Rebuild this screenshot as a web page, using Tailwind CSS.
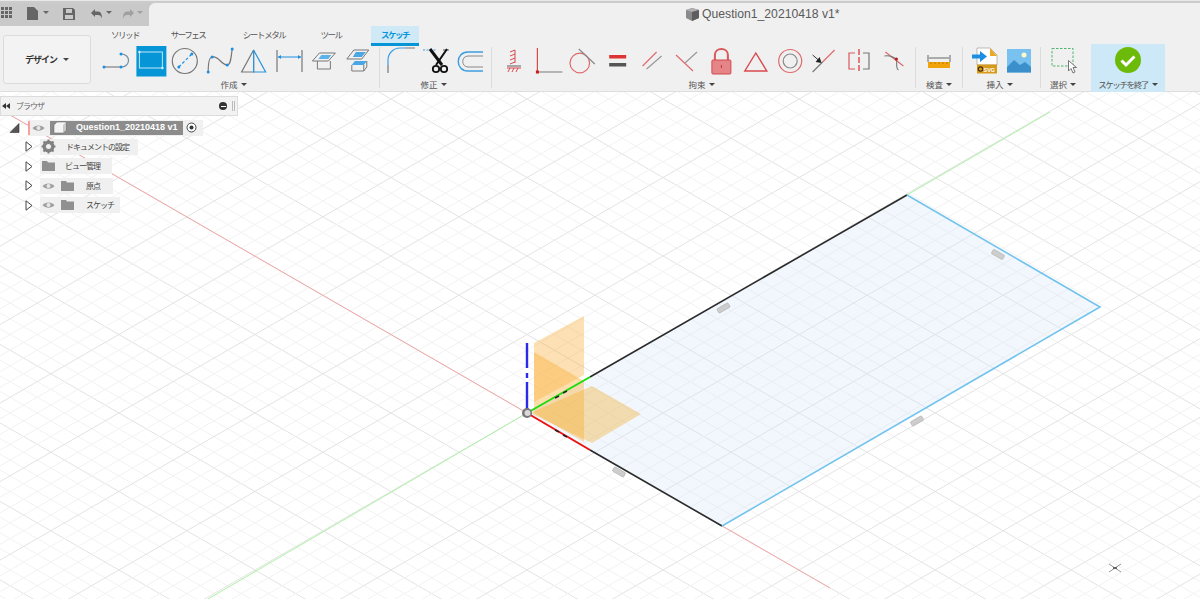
<!DOCTYPE html>
<html lang="ja">
<head>
  <meta charset="UTF-8" />
  <title>Question1_20210418 v1*</title>
  <script src="https://cdn.jsdelivr.net/npm/@tailwindcss/browser@4"></script>
</head>
<body class="bg-white w-[1200px] h-[599px] overflow-hidden flex flex-col font-['Noto_Sans_CJK_JP','Noto_Sans',sans-serif] text-[#555]">

  <!-- top bar -->
  <div class="h-[3px] bg-[#cbcbcb] border-t border-[#e8e8e8]"></div>
  <div class="h-[23px] flex bg-[#c9c9c9]">
    <div class="w-[149px] relative">
      <svg class="w-[149px] h-[23px]" viewBox="0 3 149 23">
        <g fill="#666">
          <rect x="1" y="7" width="3" height="3"/><rect x="5" y="7" width="3" height="3"/><rect x="9" y="7" width="3" height="3"/>
          <rect x="1" y="11" width="3" height="3"/><rect x="5" y="11" width="3" height="3"/><rect x="9" y="11" width="3" height="3"/>
          <rect x="1" y="15" width="3" height="3"/><rect x="5" y="15" width="3" height="3"/><rect x="9" y="15" width="3" height="3"/>
          <path d="M27 7h7l4 4v9H27z"/>
          <path d="M43 11h6l-3 3z"/>
          <path d="M63 8h10l2 2v10H63zM66 9v4h6V9zM65 15v4h8v-4z" fill-rule="evenodd"/>
          <path d="M106 11h6l-3 3z"/>
        </g>
        <path d="M91 13l4-4v2.500h3c3 0 4 3 4 7-1-2.500-2-3.500-4-3.500h-3V17z" fill="#666"/>
        <path d="M134 13l-4-4v2.500h-3c-3 0-4 3-4 7 1-2.500 2-3.500 4-3.500h3V17z" fill="#a0a0a0"/>
        <path d="M137 11h6l-3 3z" fill="#a0a0a0"/>
      </svg>
    </div>
    <div class="flex-1 bg-[#f0f0f0] rounded-tl-md flex items-center">
      <svg class="w-[15px] h-[15px] ml-[536px]" viewBox="0 0 15 15">
        <path d="M1 3l6-2 7 2v8l-7 3-6-3z" fill="#8a8a8a"/>
        <path d="M1 3l6 2 7-2-7-2z" fill="#b0b0b0"/>
        <path d="M7 5l7-2v8l-7 3z" fill="#5e5e5e"/>
      </svg>
      <span class="ml-[2px] text-[12.200px] font-['Liberation_Sans',sans-serif] text-[#5a5a5a]">Question1_20210418 v1*</span>
    </div>
  </div>

  <!-- toolbar -->
  <div class="h-[66px] shrink-0 bg-[#f0f0f0] border-b border-[#dedede] flex">
    <div class="w-[100px] shrink-0 pt-[9px] pl-[3px]">
      <div class="w-[88px] h-[49px] rounded-[3px] border border-[#dcdcdc] bg-[#f3f3f3] flex items-center justify-center gap-[6px] text-[9px] tracking-[-1px] font-bold text-[#333]">
        デザイン
        <span class="w-0 h-0 border-x-[3px] border-x-transparent border-t-[3px] border-t-[#444]"></span>
      </div>
    </div>
    <div class="flex-1 flex flex-col">
      <div class="h-[20px] flex text-[8.500px] tracking-[-1.500px] leading-[17px] text-center">
        <div class="w-[50px]">ソリッド</div>
        <div class="w-[76px]">サーフェス</div>
        <div class="w-[76px]">シート メタル</div>
        <div class="w-[58px]">ツール</div>
        <div class="ml-[11px] w-[48px] h-[20px] bg-[#cfe9f7] border-b-[3px] border-[#0696d7] font-bold text-[#0696d7]">スケッチ</div>
      </div>
      <div class="h-[46px] flex">

        <!-- create -->
        <div class="w-[279px] shrink-0 flex flex-col">
          <div class="flex h-[36px] -mt-[2px]">
            <svg class="w-[34.600px] h-[36px] shrink-0" viewBox="100 44 34.600 36">
              <path d="M104 67H121" stroke="#808080" stroke-width="1.200" fill="none"/>
              <path d="M121 54C131 54 131 67 121 67" stroke="#6d8ea6" stroke-width="1.200" fill="none"/>
              <g fill="#1d8fe0"><circle cx="104" cy="67" r="1.500"/><circle cx="121" cy="54" r="1.500"/><circle cx="121" cy="67" r="1.500"/></g>
            </svg>
            <svg class="w-[34.600px] h-[36px] shrink-0" viewBox="134.600 44 34.600 36">
              <rect x="136" y="46" width="30" height="30.500" fill="#0696d7"/>
              <rect x="139" y="52" width="23" height="16" fill="none" stroke="#bfe6f7" stroke-width="1"/>
              <g fill="#d6effa"><circle cx="139" cy="52" r="1.200"/><circle cx="162" cy="68" r="1.200"/></g>
            </svg>
            <svg class="w-[34.600px] h-[36px] shrink-0" viewBox="169.200 44 34.600 36">
              <circle cx="185" cy="61" r="12.500" fill="none" stroke="#777" stroke-width="1.200"/>
              <path d="M179 67L192 54" stroke="#1d8fe0" stroke-width="1.200" stroke-dasharray="3 2"/>
              <g fill="#1d8fe0"><circle cx="179" cy="67" r="1.500"/><circle cx="192" cy="54" r="1.500"/></g>
            </svg>
            <svg class="w-[34.600px] h-[36px] shrink-0" viewBox="203.800 44 34.600 36">
              <path d="M208 72C208 62 209 57 212 57C218 55 221 65 227 65C231 65 231 55 232 49" stroke="#777" stroke-width="1.200" fill="none"/>
              <g fill="#1d8fe0"><circle cx="208" cy="72" r="1.500"/><circle cx="212" cy="57" r="1.500"/><circle cx="227" cy="65" r="1.500"/><circle cx="232" cy="49" r="1.500"/></g>
            </svg>
            <svg class="w-[34.600px] h-[36px] shrink-0" viewBox="238.400 44 34.600 36">
              <path d="M254 50L242 72H254z" fill="none" stroke="#777" stroke-width="1.200"/>
              <path d="M254 50L266 72H254z" fill="none" stroke="#2a95dc" stroke-width="1.200"/>
            </svg>
            <svg class="w-[34.600px] h-[36px] shrink-0" viewBox="273 44 34.600 36">
              <path d="M277 50V72M302 50V72" stroke="#777" stroke-width="1.200"/>
              <path d="M278 57H301" stroke="#1d8fe0" stroke-width="1"/>
              <path d="M278 57l3-2v4zM301 57l-3-2v4z" fill="#1d8fe0"/>
            </svg>
            <svg class="w-[34.600px] h-[36px] shrink-0" viewBox="307.600 44 34.600 36">
              <path d="M312 61L319 53H335L328 61z" fill="#f2f2f2" stroke="#777"/>
              <path d="M318 59L321 55H331L328 59z" fill="#5cb3ea"/>
              <path d="M317 61V69H330V61" fill="none" stroke="#777"/>
            </svg>
            <svg class="w-[34.600px] h-[36px] shrink-0" viewBox="342.200 44 34.600 36">
              <path d="M347 59L354 50H369L362 59z" fill="none" stroke="#777"/>
              <path d="M353 57L356 52H366L362 57z" fill="#4ba6e4"/>
              <path d="M352 65L355 61H367L364 65z" fill="#4ba6e4"/>
              <path d="M352 65V71H364V65M364 71L367 67V61" fill="none" stroke="#777"/>
            </svg>
          </div>
          <div class="h-[14px] -mt-[3px] pr-[12px] flex items-center justify-center gap-[3px] text-[8.500px]">作成<span class="w-0 h-0 border-x-[3px] border-x-transparent border-t-[3px] border-t-[#444]"></span></div>
        </div>
        <div class="w-px h-[41px] mt-[1px] bg-[#dcdcdc]"></div>

        <!-- modify -->
        <div class="w-[111px] shrink-0 flex flex-col">
          <div class="flex h-[36px] -mt-[2px] pl-[5px]">
            <svg class="w-[35px] h-[36px] shrink-0" viewBox="385 44 35 36">
              <path d="M388 65V60A12 12 0 0 1 400 48H405" fill="none" stroke="#3b9de0" stroke-width="1.200"/>
              <path d="M388 65V73M405 48H415" stroke="#777" stroke-width="1.200"/>
            </svg>
            <svg class="w-[35px] h-[36px] shrink-0" viewBox="420 44 35 36">
              <path d="M423 50H436" stroke="#3b9de0" stroke-width="1.200" stroke-dasharray="2 1.500"/>
              <path d="M443 50H449" stroke="#777" stroke-width="1.200"/>
              <path d="M430 49L442 65" stroke="#111" stroke-width="3"/>
              <path d="M447 49L436 65" stroke="#111" stroke-width="2"/>
              <circle cx="436" cy="69" r="3.200" fill="none" stroke="#111" stroke-width="1.800"/>
              <circle cx="444" cy="69" r="3.200" fill="none" stroke="#111" stroke-width="1.800"/>
            </svg>
            <svg class="w-[35px] h-[36px] shrink-0" viewBox="455 44 35 36">
              <path d="M483 52H468C455 52 455 71 468 71H483" fill="none" stroke="#3b9de0" stroke-width="1.400"/>
              <path d="M483 56H468C461 56 461 67 468 67H483" fill="none" stroke="#888" stroke-width="1"/>
            </svg>
          </div>
          <div class="h-[14px] -mt-[3px] pr-[4px] flex items-center justify-center gap-[3px] text-[8.500px]">修正<span class="w-0 h-0 border-x-[3px] border-x-transparent border-t-[3px] border-t-[#444]"></span></div>
        </div>
        <div class="w-px h-[41px] mt-[1px] bg-[#dcdcdc]"></div>

        <!-- constraints -->
        <div class="w-[423px] shrink-0 flex flex-col">
          <div class="flex h-[36px] -mt-[2px] pl-[4px]">
            <svg class="w-[34.600px] h-[36px] shrink-0" viewBox="496 44 34.600 36">
              <path d="M515 50V63M510 52l5-2M510 56l5-2M510 60l5-2M510 64l5-2" stroke="#d9484c" stroke-width="1"/>
              <path d="M507 66H521" stroke="#777" stroke-width="1.200"/>
              <path d="M507 68H521M508 72l2-4M512 72l2-4M516 72l2-4" stroke="#d9484c" stroke-width="1"/>
            </svg>
            <svg class="w-[34.600px] h-[36px] shrink-0" viewBox="530.600 44 34.600 36">
              <path d="M537 48V72" stroke="#d9484c" stroke-width="1.200"/>
              <path d="M538 72H562" stroke="#777" stroke-width="1"/>
              <rect x="535.500" y="70.500" width="3" height="3" fill="#d01818"/>
            </svg>
            <svg class="w-[34.600px] h-[36px] shrink-0" viewBox="565.200 44 34.600 36">
              <circle cx="580" cy="63" r="9.800" fill="none" stroke="#de6a6c" stroke-width="1.200"/>
              <path d="M579 49L595 64" stroke="#888" stroke-width="1.200"/>
            </svg>
            <svg class="w-[34.600px] h-[36px] shrink-0" viewBox="599.800 44 34.600 36">
              <rect x="609" y="55" width="17" height="3.500" fill="#d33"/>
              <rect x="609" y="63" width="17" height="3.500" fill="#555"/>
            </svg>
            <svg class="w-[34.600px] h-[36px] shrink-0" viewBox="634.400 44 34.600 36">
              <path d="M643 66L657 52" stroke="#de6a6c" stroke-width="1.200"/>
              <path d="M647 69L662 56" stroke="#999" stroke-width="1.200"/>
            </svg>
            <svg class="w-[34.600px] h-[36px] shrink-0" viewBox="669 44 34.600 36">
              <path d="M676 55L693 71" stroke="#de6a6c" stroke-width="1.200"/>
              <path d="M685 63L697 52" stroke="#999" stroke-width="1.200"/>
            </svg>
            <svg class="w-[34.600px] h-[36px] shrink-0" viewBox="703.600 44 34.600 36">
              <path d="M714.500 60V55C714.500 47 727.500 47 727.500 55V60" fill="none" stroke="#d9585c" stroke-width="2"/>
              <rect x="711.500" y="60" width="19" height="14" rx="1" fill="#e58587" stroke="#d2494d"/>
              <path d="M721 65V68" stroke="#b5383c"/>
            </svg>
            <svg class="w-[34.600px] h-[36px] shrink-0" viewBox="738.200 44 34.600 36">
              <path d="M756 53L745 71H767z" fill="none" stroke="#d9484c" stroke-width="1.400"/>
            </svg>
            <svg class="w-[34.600px] h-[36px] shrink-0" viewBox="772.800 44 34.600 36">
              <circle cx="790" cy="61" r="11.500" fill="none" stroke="#de6a6c" stroke-width="1.200"/>
              <circle cx="790" cy="61" r="7" fill="none" stroke="#888" stroke-width="1.200"/>
            </svg>
            <svg class="w-[34.600px] h-[36px] shrink-0" viewBox="807.400 44 34.600 36">
              <path d="M835 50L823 62" stroke="#de6a6c" stroke-width="1.200"/>
              <path d="M823 62L813 72" stroke="#777" stroke-width="1.200"/>
              <path d="M813 55L820 61" stroke="#333"/>
              <path d="M822 63L816 62L820 57z" fill="#222"/>
            </svg>
            <svg class="w-[34.600px] h-[36px] shrink-0" viewBox="842 44 34.600 36">
              <path d="M855 53H849V69H855" fill="none" stroke="#d9585c" stroke-width="1.200"/>
              <path d="M863 53H869V69H863" fill="none" stroke="#777" stroke-width="1.200"/>
              <path d="M859 49V72" stroke="#d9484c" stroke-width="1.400" stroke-dasharray="6 2"/>
            </svg>
            <svg class="w-[34.600px] h-[36px] shrink-0" viewBox="876.600 44 34.600 36">
              <path d="M885 52L903 66" stroke="#de6a6c" stroke-width="1.200"/>
              <path d="M884 56C890 55 895 58 896 60C897 63 895 68 898 70" fill="none" stroke="#777" stroke-width="1.100"/>
              <circle cx="896" cy="59" r="1.600" fill="#c81818"/>
            </svg>
          </div>
          <div class="h-[14px] -mt-[3px] pr-[4px] flex items-center justify-center gap-[3px] text-[8.500px]">拘束<span class="w-0 h-0 border-x-[3px] border-x-transparent border-t-[3px] border-t-[#444]"></span></div>
        </div>
        <div class="w-px h-[41px] mt-[1px] bg-[#dcdcdc]"></div>

        <!-- inspect -->
        <div class="w-[46px] shrink-0 flex flex-col">
          <div class="flex h-[36px] -mt-[2px] pl-[6px]">
            <svg class="w-[34px] h-[36px] shrink-0" viewBox="922 44 34 36">
              <path d="M928 55V62M950 55V62M929 58H949" stroke="#666"/>
              <rect x="928" y="62" width="22" height="6" fill="#f0a30a"/>
              <path d="M931 62v2M935 62v2M939 62v2M943 62v2M947 62v2" stroke="#a86f00" stroke-width=".7"/>
            </svg>
          </div>
          <div class="h-[14px] -mt-[3px] flex items-center justify-center gap-[3px] text-[8.500px]">検査<span class="w-0 h-0 border-x-[3px] border-x-transparent border-t-[3px] border-t-[#444]"></span></div>
        </div>
        <div class="w-px h-[41px] mt-[1px] bg-[#dcdcdc]"></div>

        <!-- insert -->
        <div class="w-[77px] shrink-0 flex flex-col">
          <div class="flex h-[36px] -mt-[2px] pl-[5px]">
            <svg class="w-[34px] h-[36px] shrink-0" viewBox="968 44 34 36">
              <path d="M977 48H990L997 55V65H977z" fill="#fff" stroke="#aaa" stroke-width=".8"/>
              <path d="M990 48L997 56H990z" fill="#eaa825"/>
              <rect x="977" y="64.500" width="20" height="9" fill="#d89a1d"/>
              <circle cx="980.500" cy="69" r="2.200" fill="none" stroke="#4a3208" stroke-width="1.200"/>
              <text x="983.500" y="71.500" font-size="5.500" font-weight="700" fill="#fff" font-family="Liberation Sans, sans-serif">SVG</text>
              <path d="M972 54.500H980V51L987 56.500L980 62V58.500H972z" fill="#1d8fe0"/>
            </svg>
            <svg class="w-[34px] h-[36px] shrink-0" viewBox="1002 44 34 36">
              <rect x="1007" y="49" width="24" height="23.500" fill="#79c1ef"/>
              <circle cx="1024" cy="55" r="2.500" fill="#fff8c8"/>
              <path d="M1007 67L1014 60L1020 65L1025 62L1031 67V72.500H1007z" fill="#3b90cc"/>
            </svg>
          </div>
          <div class="h-[14px] -mt-[3px] pr-[4px] flex items-center justify-center gap-[3px] text-[8.500px]">挿入<span class="w-0 h-0 border-x-[3px] border-x-transparent border-t-[3px] border-t-[#444]"></span></div>
        </div>
        <div class="w-px h-[41px] mt-[1px] bg-[#dcdcdc]"></div>

        <!-- select -->
        <div class="w-[50px] shrink-0 flex flex-col">
          <div class="flex h-[36px] -mt-[2px] pl-[5px]">
            <svg class="w-[34px] h-[36px] shrink-0" viewBox="1046 44 34 36">
              <rect x="1052" y="48.500" width="21" height="17.500" fill="none" stroke="#4cb56e" stroke-dasharray="2.500 1.500"/>
              <path d="M1068.500 60.500V71L1071 68.500L1073 73L1075 72L1073 67.500H1076.500z" fill="#fff" stroke="#666" stroke-width=".9"/>
            </svg>
          </div>
          <div class="h-[14px] -mt-[3px] pr-[6px] flex items-center justify-center gap-[3px] text-[8.500px]">選択<span class="w-0 h-0 border-x-[3px] border-x-transparent border-t-[3px] border-t-[#444]"></span></div>
        </div>

        <!-- finish sketch -->
        <div class="w-[74px] shrink-0 -mt-[2px] h-[48px] bg-[#cde8f6] flex flex-col items-center">
          <svg class="w-[28px] h-[28px] mt-[2px]" viewBox="0 0 28 28">
            <circle cx="14" cy="14" r="13" fill="#6cbb0a"/>
            <path d="M7.500 14.500L12 19L20.500 10.500" fill="none" stroke="#fff" stroke-width="3"/>
          </svg>
          <div class="h-[14px] mt-[3px] flex items-center gap-[4px] text-[8.500px] tracking-[-1.400px] whitespace-nowrap">スケッチを終了<span class="w-0 h-0 border-x-[3px] border-x-transparent border-t-[3px] border-t-[#444]"></span></div>
        </div>
      </div>
    </div>
  </div>

  <!-- canvas -->
  <div class="relative flex-1">
    <svg class="absolute inset-0 w-[1200px] h-[507px]" viewBox="0 92 1200 507">
      <g id="grid"></g>

      <!-- world axes -->
      <path d="M-10 103.500L527 413M722 526L830 588" stroke="#f2a6a6" stroke-width="1"/>
      <path d="M208 599L527 413M907 195L1050 112" stroke="#aef0a6" stroke-width="1"/>

      <!-- sketch profile -->
      <path d="M527 413L907 195L1100 307L722 526z" fill="#cfe6f7" fill-opacity=".3"/>
      <path d="M534 343L584 316V375L534 402z" fill="#fbb03b" fill-opacity=".38"/>
      <path d="M534 352L584 381V442L534 413z" fill="#fbb03b" fill-opacity=".42"/>
      <path d="M530 413L592 386L641 414L592 443z" fill="#f5b030" fill-opacity=".38"/>
      <path d="M590 377L907 195M590 450L722 526" stroke="#2b2b2b" stroke-width="1.600"/>
      <path d="M907 195L1100 307L722 526" fill="none" stroke="#72c3ee" stroke-width="1.600"/>

      <!-- sketch origin -->
      <path d="M527 413L590 377" stroke="#1fdc0f" stroke-width="2"/>
      <path d="M527 413L590 450" stroke="#ee1111" stroke-width="2"/>
      <path d="M555 398L559 396M563 393L567 391" stroke="#222" stroke-width="1.600"/>
      <path d="M555 430L559 432M563 435L567 437" stroke="#222" stroke-width="1.600"/>
      <path d="M527 343V368M527 373V378M527 382V412" stroke="#2a2ae8" stroke-width="2.400"/>
      <circle cx="527" cy="413" r="5" fill="#777"/>
      <circle cx="527.500" cy="413" r="3" fill="#d9d9d9"/>

      <!-- dimension markers -->
      <g fill="#cdcdcd" stroke="#aaa" stroke-width=".5">
        <rect x="717" y="305.500" width="13" height="5" rx="1" transform="rotate(-30 723.500 308)"/>
        <rect x="991.500" y="252" width="13" height="5" rx="1" transform="rotate(30 998 254.500)"/>
        <rect x="910.500" y="418.500" width="13" height="5" rx="1" transform="rotate(-30 917 421)"/>
        <rect x="612.500" y="469.500" width="13" height="5" rx="1" transform="rotate(30 619 472)"/>
      </g>
      <path d="M1109 564L1121 572M1109 572L1121 564" stroke="#777" stroke-width=".8"/>
      <rect x="1113" y="567" width="4" height="2" fill="#666"/>
    </svg>

    <!-- browser panel -->
    <div class="absolute left-0 top-[4px] w-[238px] text-[8px] tracking-[-1px] text-[#444]">
      <div class="h-[20px] bg-[#f2f2f2] border border-[#dcdcdc] flex items-center pl-[1px] pr-[2px]">
        <svg class="w-[8px] h-[6px]" viewBox="0 0 8 6"><path d="M4 0v6L0 3zM8 0v6L4 3z" fill="#333"/></svg>
        <span class="ml-[6px] text-[#666]">ブラウザ</span>
        <span class="ml-auto w-[8px] h-[8px] rounded-full bg-[#333] flex items-center justify-center"><span class="w-[5px] h-px bg-white"></span></span>
        <span class="ml-[5px] w-[3px] h-[10px] border-x border-[#bbb]"></span>
      </div>
      <div class="mt-[2px] flex flex-col">
        <div class="h-[19px] flex items-center">
          <svg class="w-[12px] h-[10px] ml-[9px] shrink-0" viewBox="0 0 12 10"><path d="M1 9.500L10 .5V9.500z" fill="#555" stroke="#333" stroke-width=".6"/></svg>
          <div class="ml-[7px] w-[175px] h-[16px] bg-[#f0f0f0] flex items-center">
            <span class="w-[2px] h-[14px] bg-[#f7a0a0]"></span>
            <svg class="w-[13px] h-[8px] ml-[2px]" viewBox="0 0 13 8"><path d="M.5 4C3 .5 10 .5 12.500 4C10 7.500 3 7.500 .5 4z" fill="#a0a0a0"/><circle cx="6.500" cy="4" r="2" fill="#e8e8e8"/></svg>
            <div class="ml-[5px] w-[133px] h-[14px] bg-[#8c8c8c] flex items-center">
              <svg class="w-[14px] h-[13px] ml-[3px] shrink-0" viewBox="0 0 14 13"><path d="M1 4L4 1H13V9L10 12H1z" fill="#f4f4f4" stroke="#666" stroke-width=".5"/><path d="M10 4L13 1V9L10 12z" fill="#c8c8c8"/></svg>
              <span class="ml-[9px] text-[9px] tracking-normal font-bold text-white font-['Liberation_Sans',sans-serif] whitespace-nowrap">Question1_20210418 v1</span>
            </div>
            <svg class="w-[11px] h-[11px] ml-[3px]" viewBox="0 0 11 11"><circle cx="5.500" cy="5.500" r="4.500" fill="#fff" stroke="#444"/><circle cx="5.500" cy="5.500" r="2" fill="#333"/></svg>
          </div>
        </div>
        <div class="h-[19.500px] flex items-center">
          <svg class="w-[8px] h-[11px] ml-[25px] shrink-0" viewBox="0 0 8 11"><path d="M1 .8L7 5.500L1 10.200z" fill="#fff" stroke="#444" stroke-width="1"/></svg>
          <div class="ml-[7px] w-[98px] h-[16px] bg-[#f0f0f0] flex items-center">
            <svg class="w-[15px] h-[15px] ml-[1px]" viewBox="0 0 15 15"><circle cx="7.500" cy="7.500" r="4.500" fill="none" stroke="#808080" stroke-width="3"/><path d="M7.500 .5V14.500M.5 7.500H14.500M2.500 2.500L12.500 12.500M12.500 2.500L2.500 12.500" stroke="#808080" stroke-width="2"/><circle cx="7.500" cy="7.500" r="2.500" fill="#f0f0f0"/></svg>
            <span class="ml-[10px] whitespace-nowrap">ドキュメントの設定</span>
          </div>
        </div>
        <div class="h-[19.500px] flex items-center">
          <svg class="w-[8px] h-[11px] ml-[25px] shrink-0" viewBox="0 0 8 11"><path d="M1 .8L7 5.500L1 10.200z" fill="#fff" stroke="#444" stroke-width="1"/></svg>
          <div class="ml-[7px] w-[72px] h-[16px] bg-[#f0f0f0] flex items-center">
            <svg class="w-[13px] h-[10px] ml-[2px]" viewBox="0 0 13 10"><path d="M0 0H5L6 1.500H13V10H0z" fill="#909090"/></svg>
            <span class="ml-[10px] whitespace-nowrap">ビュー管理</span>
          </div>
        </div>
        <div class="h-[19.500px] flex items-center">
          <svg class="w-[8px] h-[11px] ml-[25px] shrink-0" viewBox="0 0 8 11"><path d="M1 .8L7 5.500L1 10.200z" fill="#fff" stroke="#444" stroke-width="1"/></svg>
          <div class="ml-[7px] w-[73px] h-[16px] bg-[#f0f0f0] flex items-center">
            <svg class="w-[13px] h-[8px] ml-[2px]" viewBox="0 0 13 8"><path d="M.5 4C3 .5 10 .5 12.500 4C10 7.500 3 7.500 .5 4z" fill="#a0a0a0"/><circle cx="6.500" cy="4" r="2" fill="#e8e8e8"/></svg>
            <svg class="w-[13px] h-[10px] ml-[6px]" viewBox="0 0 13 10"><path d="M0 0H5L6 1.500H13V10H0z" fill="#909090"/></svg>
            <span class="ml-[12px] whitespace-nowrap">原点</span>
          </div>
        </div>
        <div class="h-[19.500px] flex items-center">
          <svg class="w-[8px] h-[11px] ml-[25px] shrink-0" viewBox="0 0 8 11"><path d="M1 .8L7 5.500L1 10.200z" fill="#fff" stroke="#444" stroke-width="1"/></svg>
          <div class="ml-[7px] w-[80px] h-[16px] bg-[#f0f0f0] flex items-center">
            <svg class="w-[13px] h-[8px] ml-[2px]" viewBox="0 0 13 8"><path d="M.5 4C3 .5 10 .5 12.500 4C10 7.500 3 7.500 .5 4z" fill="#a0a0a0"/><circle cx="6.500" cy="4" r="2" fill="#e8e8e8"/></svg>
            <svg class="w-[13px] h-[10px] ml-[6px]" viewBox="0 0 13 10"><path d="M0 0H5L6 1.500H13V10H0z" fill="#909090"/></svg>
            <span class="ml-[12px] whitespace-nowrap">スケッチ</span>
          </div>
        </div>
      </div>
    </div>
  </div>

  <script>
    // isometric ground grid, every 5th line is a major one
    const grid = document.getElementById('grid');
    const ox = 527, oy = 413, slope = 0.577, step = 15.7;
    for (const dir of [1, -1]) {
      for (let k = -120; k <= 120; k++) {
        const line = document.createElementNS('http://www.w3.org/2000/svg', 'line');
        line.setAttribute('x1', 0);
        line.setAttribute('y1', oy + dir * slope * (0 - ox) + k * step);
        line.setAttribute('x2', 1200);
        line.setAttribute('y2', oy + dir * slope * (1200 - ox) + k * step);
        line.setAttribute('stroke', k % 5 === 0 ? '#e3e3e3' : '#f2f2f2');
        line.setAttribute('stroke-width', 1);
        grid.appendChild(line);
      }
    }
  </script>
</body>
</html>
